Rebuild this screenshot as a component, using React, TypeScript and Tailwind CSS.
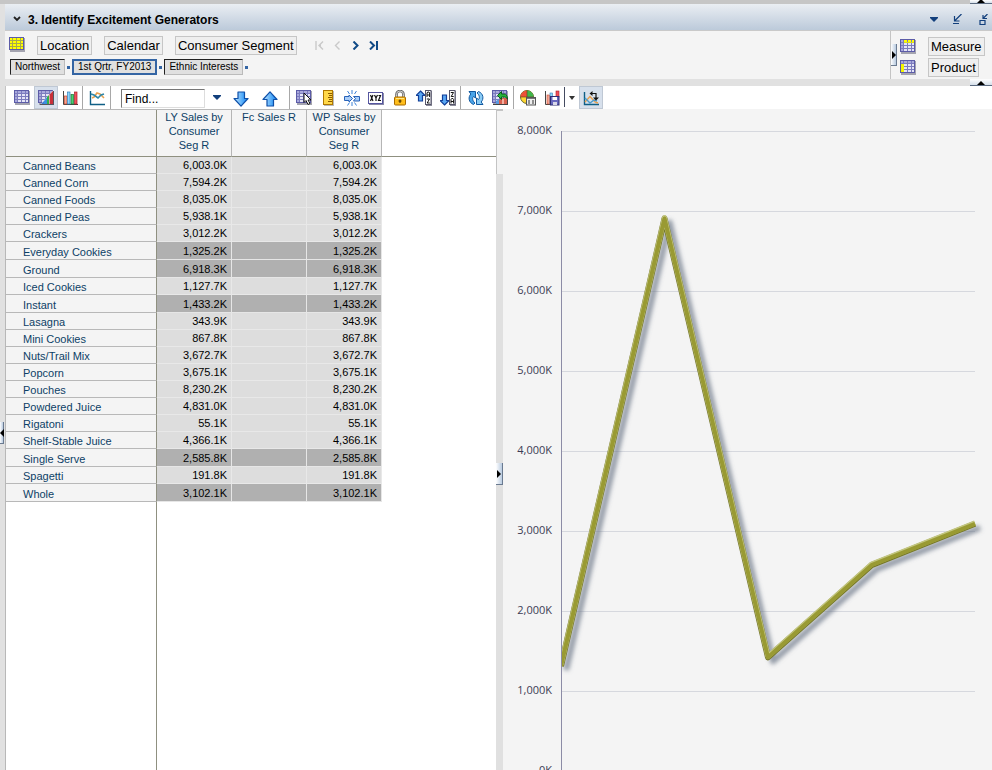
import type { ReactNode } from "react";

const rows = [
  { name: "Canned Beans", value: "6,003.0K" },
  { name: "Canned Corn", value: "7,594.2K" },
  { name: "Canned Foods", value: "8,035.0K" },
  { name: "Canned Peas", value: "5,938.1K" },
  { name: "Crackers", value: "3,012.2K" },
  { name: "Everyday Cookies", value: "1,325.2K", selected: true },
  { name: "Ground", value: "6,918.3K", selected: true },
  { name: "Iced Cookies", value: "1,127.7K" },
  { name: "Instant", value: "1,433.2K", selected: true },
  { name: "Lasagna", value: "343.9K" },
  { name: "Mini Cookies", value: "867.8K" },
  { name: "Nuts/Trail Mix", value: "3,672.7K" },
  { name: "Popcorn", value: "3,675.1K" },
  { name: "Pouches", value: "8,230.2K" },
  { name: "Powdered Juice", value: "4,831.0K" },
  { name: "Rigatoni", value: "55.1K" },
  { name: "Shelf-Stable Juice", value: "4,366.1K" },
  { name: "Single Serve", value: "2,585.8K", selected: true },
  { name: "Spagetti", value: "191.8K" },
  { name: "Whole", value: "3,102.1K", selected: true },
];

const axisLabels = ["8,000K", "7,000K", "6,000K", "5,000K", "4,000K", "3,000K", "2,000K", "1,000K", "0K"];

// the chart plots the selected rows only
const PLOT_W = 414;
const STEP = 80;
const selected = rows.filter((r) => r.selected).map((r) => parseFloat(r.value.replace(",", "")));
const points = selected
  .map((v, i) => `${(i * PLOT_W) / (selected.length - 1)},${8 * STEP - (v / 1000) * STEP}`)
  .join(" ");

function Icon({ children, w = 16, h = 16 }: { children: ReactNode; w?: number; h?: number }) {
  return (
    <svg width={w} height={h} viewBox={`0 0 ${w} ${h}`} aria-hidden="true" className="block shrink-0">
      {children}
    </svg>
  );
}

const gridCols = [
  [1, 2],
  [4, 3],
  [8, 3],
  [12, 2],
];
const gridRows = [
  [1, 2],
  [4, 2],
  [7, 2],
  [10, 2],
];

function GridShape({ mark = "none" }: { mark?: "none" | "all" | "top" | "left" }) {
  return (
    <g shapeRendering="crispEdges">
      <rect x="1" y="1" width="15" height="14" fill="#a4a4b0" />
      <rect width="15" height="13" fill="#5c5ca8" />
      <rect x="1" y="1" width="13" height="11" fill={mark === "all" ? "#a8a850" : "#7c7cbe"} />
      {gridRows.map(([y, h], r) =>
        gridCols.map(([x, w], c) => {
          const yellow =
            mark === "all" || (mark === "top" && r === 0 && c > 0) || (mark === "left" && c === 0 && r > 0);
          const fill = yellow ? "#ffff00" : r === 0 || c === 0 ? "#a9a9dc" : "#e4e4f6";
          return <rect key={`${r}-${c}`} x={x} y={y} width={w} height={h} fill={fill} />;
        })
      )}
      {mark === "top" && <rect x="4" y="3" width="10" height="1" fill="#d8d820" />}
      {mark === "left" && <rect x="1" y="4" width="3" height="8" fill="#f4f400" />}
    </g>
  );
}

function GridIcon({ mark }: { mark?: "none" | "all" | "top" | "left" }) {
  return (
    <Icon>
      <GridShape mark={mark} />
    </Icon>
  );
}

function GridChartIcon() {
  return (
    <Icon>
      <GridShape />
      <path d="M2 15 15.500 0v15z" fill="#fff" />
      <path d="M3 14 6 11v3z" fill="#3f7fd0" />
      <path d="M6 14v-3l3-4v7z" fill="#3d8fe0" />
      <path d="M9 14V7l2-2v9z" fill="#2fb04c" />
      <path d="M11.500 14V4.500L15 1v13z" fill="#c9303a" />
      <path d="M2 14.500h14M15.500 1v14" stroke="#55555f" />
    </Icon>
  );
}

function BarsIcon() {
  return (
    <Icon>
      <path d="M1.500 1v13.500H16" fill="none" stroke="#444" />
      <rect x="2.500" y="6" width="2.500" height="8" fill="#f6a592" stroke="#c8492f" strokeWidth=".7" />
      <rect x="5.500" y="2" width="2.500" height="12" fill="#8fd6fa" stroke="#2f7fc0" strokeWidth=".7" />
      <rect x="9" y="4.500" width="2.500" height="9.500" fill="#4ad070" stroke="#1b7334" strokeWidth=".7" />
      <rect x="12.500" y="2" width="2.500" height="12" fill="#f0505c" stroke="#a81f27" strokeWidth=".7" />
    </Icon>
  );
}

function LineIcon() {
  return (
    <Icon>
      <path d="M1.500 1v13.500H16" fill="none" stroke="#0f5f86" strokeWidth="1.400" />
      <path d="m3 8 2-1 3-4 3 1 4 4" fill="none" stroke="#e8a04e" strokeWidth="1.600" />
      <path d="m2 4 3 1 4 3 3-3 3-1" fill="none" stroke="#2d88aa" strokeWidth="1.600" />
    </Icon>
  );
}

function ArrowIcon({ up = false }: { up?: boolean }) {
  return (
    <Icon>
      <defs>
        <linearGradient id={up ? "au" : "ad"} x1="0" x2="1">
          <stop offset="0" stopColor="#bfe6ff" />
          <stop offset="1" stopColor="#0c84f4" />
        </linearGradient>
      </defs>
      <path
        d={up ? "M8 .8 15 8.500H11.500V15H5V8.500H1z" : "M8 15.200 15 7.500H11.500V1H5V7.500H1z"}
        fill={up ? "url(#au)" : "url(#ad)"}
        stroke="#0e4fa8"
        strokeWidth="1.200"
        strokeLinejoin="round"
      />
    </Icon>
  );
}

function GridCursorIcon() {
  return (
    <Icon>
      <GridShape />
      <path d="M8 3v9.500l2-2 2 4 2-1-2-3.500h3z" fill="#fff" stroke="#111" />
    </Icon>
  );
}

function RulerIcon() {
  return (
    <Icon>
      <rect x="4" y="1" width="10" height="15" fill="#8a8a8a" opacity=".6" />
      <rect x="3.500" y=".5" width="9" height="14" fill="#ffd84a" stroke="#b07800" />
      <path d="M8 3.500h4M9 5.500h3M8 7.500h4M9 9.500h3M8 11.500h4" stroke="#8a5a00" />
    </Icon>
  );
}

function SplitIcon() {
  return (
    <Icon>
      <path d="M.5 6.500H5V5l3.500 3.500L5 12v-1.500H.5z" fill="#a9cdf8" stroke="#2862b8" />
      <path d="M15.500 6.500H9.500l2 2-2 2.500h6z" fill="#a9cdf8" stroke="#2862b8" />
      <path d="M8 0v4M3.500 1l2 3M12.500 1l-2 3M8 12v4M3.500 15.500l2-3M12.500 15.500l-2-3" stroke="#3f83d8" />
    </Icon>
  );
}

function XyzIcon() {
  return (
    <Icon>
      <rect x="1" y="3" width="15" height="12" fill="#8888a8" />
      <rect x=".5" y="2.500" width="14" height="11" fill="#fff" stroke="#5656a0" />
      <path
        d="m2.500 5 2.500 6M5 5l-2.500 6M6.500 5 8 8l1.500-3M8 8v3M10.500 5.500h2l-2 5H13"
        fill="none"
        stroke="#111"
        strokeWidth="1.200"
      />
    </Icon>
  );
}

function LockIcon() {
  return (
    <Icon>
      <path d="M4.500 8V4.500a3.500 3.500 0 0 1 7 0V8" fill="none" stroke="#666" strokeWidth="2.600" />
      <path d="M4.500 8V4.500a3.500 3.500 0 0 1 7 0V8" fill="none" stroke="#ddd" strokeWidth=".9" />
      <rect x="2.500" y="7" width="11" height="8" rx="1" fill="#ffbe1c" stroke="#a86a00" />
      <path d="M4 8.500h8" stroke="#ffe88a" />
      <path d="M8 9.500v3.500M6.500 11h3" stroke="#3d2600" />
    </Icon>
  );
}

function SortIcon({ down = false }: { down?: boolean }) {
  return (
    <Icon>
      <path
        d={down ? "M4.500 15 9 10.500H6.500V5H2.500v5.500H0z" : "M4.500 1 9 5.500H6.500V11H2.500V5.500H0z"}
        fill="#5aa8f4"
        stroke="#123f98"
        strokeWidth="1.200"
      />
      <rect x="10" y="1" width="6" height="15" fill="#8a8a98" />
      <rect x="9.500" y=".5" width="5.500" height="14" fill="#fff" stroke="#55556a" />
      <path
        d="M11 7V3l.7-1h1.200l.7 1v4M11 5h2.600"
        transform={down ? "translate(0 6.500)" : undefined}
        fill="none"
        stroke="#111"
      />
      <path
        d="M10.800 2.500h2.700l-2.300 4h2.500"
        transform={down ? undefined : "translate(0 6.500)"}
        fill="none"
        stroke="#111"
      />
    </Icon>
  );
}

function RefreshIcon() {
  return (
    <Icon>
      <path
        d="M1 1.500h6.500V8L5.500 6.500C4 8 4.500 11 7 13l-1.500 1.500C.5 12.500 0 7 2.800 4z"
        fill="#4aa4e8"
        stroke="#1259a0"
      />
      <path
        d="M15 14.500H8.500V8l2 1.500C12 8 11.500 5 9 3l1.500-1.500C15.500 3.500 16 9 13.200 12z"
        fill="#8accf6"
        stroke="#1259a0"
      />
    </Icon>
  );
}

function GridExportIcon() {
  return (
    <Icon>
      <GridShape />
      <path d="M4 14h11V8H9z" fill="#d8604e" />
      <path d="M4 14v-3l3-2v5z" fill="#5a9be0" />
      <path d="M10 14V9h2v5z" fill="#f2b0a0" />
      <path d="m5.500 5.500 4-4V4h2.500c2 0 3.500 1.500 3.500 5-1-1.500-2-2-3.500-2H9.500v2.500z" fill="#28b53c" stroke="#0c5c1a" />
      <path d="M1 14.500h15M15.500 9v6" stroke="#444" />
    </Icon>
  );
}

function PieIcon() {
  return (
    <Icon>
      <circle cx="7" cy="7" r="6.500" fill="#ffd632" stroke="#6a6a2a" />
      <path d="M7 7V.5A6.500 6.500 0 0 1 13.500 7z" fill="#3eb64c" />
      <path d="M7 7H.5A6.500 6.500 0 0 1 7 .5z" fill="#ee5038" />
      <path d="M7 .5V7h6.500M.5 7H7" fill="none" stroke="#6a4a1a" strokeWidth=".7" />
      <rect x="6.500" y="7.500" width="9" height="7.500" fill="#eee" stroke="#555" />
      <path d="M7 8.500h8" stroke="#777" />
      <path d="M8 11h2m2 0h2M8 13h2m2 0h2" stroke="#333" />
    </Icon>
  );
}

function ChartSaveIcon() {
  return (
    <Icon>
      <path d="M1.500 1v13.500H14" fill="none" stroke="#444" />
      <rect x="3" y="5" width="2.500" height="9" fill="#f6a592" stroke="#c8492f" strokeWidth=".6" />
      <rect x="6" y="3" width="2.500" height="11" fill="#8fd6fa" stroke="#2f7fc0" strokeWidth=".6" />
      <rect x="12" y="1" width="3" height="6" fill="#f0505c" stroke="#a81f27" strokeWidth=".6" />
      <rect x="6.500" y="6.500" width="8.500" height="8.500" fill="#6868c0" stroke="#2c2c70" />
      <rect x="8.500" y="7" width="4.500" height="3" fill="#fff" />
      <rect x="9" y="12" width="4" height="3" fill="#d8d8e8" />
    </Icon>
  );
}

function LinkChartIcon() {
  return (
    <Icon>
      <path d="M1.500 2v12.500H16" fill="none" stroke="#0f5f86" strokeWidth="1.400" />
      <path d="m2 12 5-5.500 5 5.500 3 1" fill="none" stroke="#e8a04e" strokeWidth="1.400" />
      <path d="m2 8 5 5 4-3 3 1" fill="none" stroke="#4b9ccc" strokeWidth="1.400" />
      <path d="M8 3.500h5v5" fill="none" stroke="#111" strokeWidth="1.200" />
      <path d="M6.500 3.500 9.500 1v5zM10 7.500h6l-3 3z" fill="#111" />
    </Icon>
  );
}

function Caret({ fill = "#123f7c" }: { fill?: string }) {
  return (
    <Icon w={8} h={5}>
      <path d="M0 0h8v1L4 5 0 1z" fill={fill} />
    </Icon>
  );
}

function ToolButton({ label, children, active = false }: { label: string; children: ReactNode; active?: boolean }) {
  return (
    <button
      type="button"
      aria-label={label}
      aria-pressed={active}
      className={
        active
          ? "flex h-full w-6 shrink-0 items-center justify-center border border-[#bfc8d4] bg-[#d7e0ec]"
          : "flex h-full w-6 shrink-0 items-center justify-center"
      }
    >
      {children}
    </button>
  );
}

function Separator() {
  return <span className="h-full w-px shrink-0 bg-[#a8a8a8]" />;
}

function DimensionButton({ children }: { children: ReactNode }) {
  return (
    <button
      type="button"
      className="h-[19px] border border-[#c6c6c6] bg-[#efefef] px-[2px] text-[13px] leading-[17px] whitespace-nowrap text-black"
    >
      {children}
    </button>
  );
}

function Chip({ children, active = false }: { children: ReactNode; active?: boolean }) {
  return (
    <button
      type="button"
      className={
        active
          ? "h-4 border-2 border-[#3465a4] bg-[#e0e0e0] px-1 text-[10px] leading-3 whitespace-nowrap"
          : "h-4 border border-t-[#222] border-r-[#bbb] border-b-[#bbb] border-l-[#222] bg-[#e0e0e0] px-1 text-[10px] leading-[14px] whitespace-nowrap"
      }
    >
      {children}
    </button>
  );
}

function Dot() {
  return <span className="mx-[2px] size-[3px] shrink-0 bg-[#3465a4]" />;
}

function Grip({ label, left = false }: { label: string; left?: boolean }) {
  return (
    <button
      type="button"
      aria-label={label}
      className="flex h-[22px] w-full items-center justify-center border-r border-b border-[#6a7a90] bg-linear-to-r from-white to-[#b9cbe0]"
    >
      <Icon w={4} h={8}>
        <path d={left ? "M4 0v8L0 4z" : "M0 0v8l4-4z"} fill="#000" />
      </Icon>
    </button>
  );
}

function UpTab({ label }: { label: string }) {
  return (
    <button
      type="button"
      aria-label={label}
      className="flex h-full w-[22px] items-end justify-center border-b border-[#5a6a80] bg-linear-to-b from-white to-[#d5dfea]"
    >
      <Icon w={8} h={4}>
        <path d="M4 0 8 4H0z" fill="#000" />
      </Icon>
    </button>
  );
}

function TitleBar() {
  return (
    <header className="flex h-[27px] shrink-0 items-center border-b border-[#c9c9c9] bg-linear-to-b from-[#eaeef3] to-[#bccada] pt-1 pr-1 pl-2">
      <Icon w={8} h={6}>
        <path d="m1 1 3 3 3-3" fill="none" stroke="#222" strokeWidth="1.800" />
      </Icon>
      <h1 className="ml-[7px] flex-1 pt-[2px] text-[12px] leading-4 font-bold text-black">
        3. Identify Excitement Generators
      </h1>
      <div className="flex items-center gap-[15px]">
        <button type="button" aria-label="Menu">
          <Caret />
        </button>
        <button type="button" aria-label="Restore">
          <Icon w={9} h={10}>
            <path d="M8.500 0 2 6.500M1.500 2v5h5M0 9.500h6" fill="none" stroke="#123f7c" strokeWidth="1.200" />
          </Icon>
        </button>
        <button type="button" aria-label="Detach" className="ml-[2px]">
          <Icon w={9} h={11}>
            <path d="M8.500 0 4.500 4M4 1v3.500h4M1 6.500h5v4H1z" fill="none" stroke="#123f7c" strokeWidth="1.200" />
          </Icon>
        </button>
      </div>
    </header>
  );
}

function NavButton({ label, d, off = false }: { label: string; d: string; off?: boolean }) {
  return (
    <button type="button" aria-label={label} disabled={off} className="flex w-[18px] justify-center">
      <Icon w={9} h={9}>
        <path d={d} fill="none" stroke={off ? "#c9c9c9" : "#104a86"} strokeWidth={off ? 1.4 : 2} />
      </Icon>
    </button>
  );
}

function Dimensions() {
  return (
    <section className="flex h-12 shrink-0 bg-[#f4f4f4]">
      <div className="min-w-0 flex-1 pl-1">
        <div className="mt-1 flex h-5 items-center">
          <GridIcon mark="all" />
          <div className="ml-3 flex gap-3">
            <DimensionButton>Location</DimensionButton>
            <DimensionButton>Calendar</DimensionButton>
            <DimensionButton>Consumer Segment</DimensionButton>
          </div>
          <div className="ml-[14px] flex">
            <NavButton label="First" off d="M1 0v9M8 .5 4 4.500l4 4M4 4.500h2" />
            <NavButton label="Previous" off d="M6.500.5 2.500 4.500l4 4" />
            <NavButton label="Next" d="m2.500.5 4 4-4 4" />
            <NavButton label="Last" d="m1 .5 4 4-4 4M8 0v9" />
          </div>
        </div>
        <div className="mt-1 flex items-center pl-px">
          <Chip>Northwest</Chip>
          <Dot />
          <Chip active>1st Qrtr, FY2013</Chip>
          <Dot />
          <Chip>Ethnic Interests</Chip>
          <Dot />
        </div>
      </div>
      <div className="flex w-[102px] shrink-0 border-l border-[#c4c4c4]">
        <div className="w-[6px] pt-[13px]">
          <Grip label="Collapse axes" />
        </div>
        <div className="flex flex-col gap-[2px] pt-[6px] pl-[3px]">
          <div className="flex items-center gap-3">
            <GridIcon mark="top" />
            <DimensionButton>Measure</DimensionButton>
          </div>
          <div className="flex items-center gap-3">
            <GridIcon mark="left" />
            <DimensionButton>Product</DimensionButton>
          </div>
        </div>
      </div>
    </section>
  );
}

function Toolbar() {
  return (
    <div role="toolbar" className="flex h-[23px] shrink-0 items-center border-l border-[#c4c4c4] bg-white pl-1">
      <ToolButton label="Table">
        <GridIcon />
      </ToolButton>
      <ToolButton label="Table and graph" active>
        <GridChartIcon />
      </ToolButton>
      <ToolButton label="Graph">
        <BarsIcon />
      </ToolButton>
      <Separator />
      <div className="flex h-full w-[27px] justify-center">
        <ToolButton label="Line chart">
          <LineIcon />
        </ToolButton>
      </div>
      <Separator />
      <input
        type="text"
        aria-label="Find"
        defaultValue="Find..."
        className="mt-[2px] ml-[10px] h-[19px] w-[84px] border border-t-[#777] border-r-[#ddd] border-b-[#ddd] border-l-[#777] bg-white px-[3px] text-[12px] leading-4 text-black outline-none"
      />
      <ToolButton label="Find options">
        <Caret />
      </ToolButton>
      <div className="flex h-full gap-[5px] pt-[2px]">
        <ToolButton label="Find next">
          <ArrowIcon />
        </ToolButton>
        <ToolButton label="Find previous">
          <ArrowIcon up />
        </ToolButton>
      </div>
      <div className="ml-[7px] flex h-full">
        <Separator />
      </div>
      <div className="ml-[2px] flex h-full">
        <ToolButton label="Select cells">
          <GridCursorIcon />
        </ToolButton>
        <ToolButton label="Column width">
          <RulerIcon />
        </ToolButton>
        <ToolButton label="Spread">
          <SplitIcon />
        </ToolButton>
        <ToolButton label="Format">
          <XyzIcon />
        </ToolButton>
        <ToolButton label="Lock">
          <LockIcon />
        </ToolButton>
        <ToolButton label="Sort ascending">
          <SortIcon />
        </ToolButton>
        <ToolButton label="Sort descending">
          <SortIcon down />
        </ToolButton>
      </div>
      <Separator />
      <div className="mr-px ml-[3px] flex h-full">
        <ToolButton label="Refresh">
          <RefreshIcon />
        </ToolButton>
        <ToolButton label="Export">
          <GridExportIcon />
        </ToolButton>
      </div>
      <Separator />
      <div className="ml-[2px] flex h-full">
        <ToolButton label="Chart calculation">
          <PieIcon />
        </ToolButton>
        <ToolButton label="Save chart">
          <ChartSaveIcon />
        </ToolButton>
        <span className="mt-px h-5 w-px bg-[#444b60]" />
        <button type="button" aria-label="Save options" className="flex w-[14px] items-center justify-center">
          <Icon w={6} h={4}>
            <path d="M0 0h6L3 4z" fill="#333" />
          </Icon>
        </button>
      </div>
      <ToolButton label="Link chart to selection" active>
        <LinkChartIcon />
      </ToolButton>
    </div>
  );
}

function SalesTable() {
  const head =
    "border-r border-b border-r-[#b5b5b5] border-b-[#8f9080] bg-[#f4f4f4] px-1 text-center align-top font-normal leading-[14px] text-[#0d3f66]";
  return (
    <section className="flex min-h-0 flex-col border-l border-[#b8b8b8] bg-white">
      <table className="w-full table-fixed border-separate border-spacing-0 border-t border-[#b8b8b8] text-[11px]">
        <colgroup>
          <col className="w-[151px]" />
          <col className="w-[75px]" />
          <col className="w-[75px]" />
          <col className="w-[75px]" />
          <col />
        </colgroup>
        <thead>
          <tr className="h-[47px]">
            <td className="border-r border-b border-[#8f9080] bg-[#f4f4f4]" />
            <th scope="col" className={head}>LY Sales by Consumer Seg R</th>
            <th scope="col" className={head}>Fc Sales R</th>
            <th scope="col" className={head}>WP Sales by Consumer Seg R</th>
            <td className="border-b border-[#8f9080]" />
          </tr>
        </thead>
        <tbody>
          {rows.map((row) => {
            const cell = row.selected
              ? "border-r border-b border-[#e6e6e6] bg-[#b0b0b0] py-0 pr-1 text-right leading-4 text-black"
              : "border-r border-b border-[#e8e8e8] bg-[#dddddd] py-0 pr-1 text-right leading-4 text-black";
            return (
              <tr key={row.name} className={row.selected ? "h-[18px]" : "h-[17px]"}>
                <th
                  scope="row"
                  className="border-r border-b border-r-[#8f9080] border-b-[#b8b8b8] bg-[#f4f4f4] pt-[2px] pl-[17px] text-left leading-[14px] font-normal text-[#0d3f66]"
                >
                  {row.name}
                </th>
                <td className={cell}>{row.value}</td>
                <td className={cell} />
                <td className={cell}>{row.value}</td>
                <td />
              </tr>
            );
          })}
        </tbody>
      </table>
      <div className="w-[151px] flex-1 border-r border-[#8f9080]" />
    </section>
  );
}

function SalesChart() {
  return (
    <section className="flex min-w-0 overflow-hidden bg-[#f4f4f4] pt-[22px] pr-[17px]">
      <div className="-mt-[9px] w-[49px] shrink-0 text-right font-['Open_Sans','Noto_Sans',sans-serif] text-[11px] leading-4 text-[#3c3c54]">
        {axisLabels.map((label) => (
          <div key={label} className="h-20">
            {label}
          </div>
        ))}
      </div>
      <svg
        viewBox={`0 0 ${PLOT_W} 640`}
        preserveAspectRatio="none"
        className="ml-[9px] h-[640px] min-w-0 flex-1 overflow-visible"
        role="img"
        aria-label="Sales of the selected products"
      >
        <defs>
          <clipPath id="plot">
            <rect x="0" y="-10" width={PLOT_W + 12} height="660" />
          </clipPath>
          <filter id="shadow" x="-5%" y="-5%" width="115%" height="115%">
            <feGaussianBlur stdDeviation="2" />
          </filter>
        </defs>
        {axisLabels.map((label, i) => (
          <path key={label} d={`M0 ${i * STEP + 0.5}H${PLOT_W}`} stroke="#d6d8de" />
        ))}
        <g clipPath="url(#plot)" fill="none" strokeLinejoin="round">
          <polyline
            points={points}
            transform="translate(5 5)"
            stroke="#6c7688"
            strokeOpacity="0.7"
            strokeWidth="6"
            filter="url(#shadow)"
          />
          <g transform="translate(0 1)">
            <polyline points={points} stroke="#76782a" strokeWidth="6" />
            <polyline points={points} transform="translate(0 -1)" stroke="#c3c680" strokeWidth="5" />
            <polyline points={points} stroke="#999a33" strokeWidth="4" />
          </g>
        </g>
        <path d="M.5 0v640" stroke="#8c8ca6" />
      </svg>
    </section>
  );
}

export default function App() {
  return (
    <div className="flex h-screen flex-col overflow-hidden bg-[#e1e1e1] font-['Liberation_Sans',Arial,sans-serif] text-black">
      <div className="flex h-1 shrink-0 justify-end bg-[#c6c6c6]">
        <UpTab label="Collapse header" />
      </div>
      <div className="flex min-h-0 flex-1">
        <div className="flex w-[5px] shrink-0 flex-col pt-[418px] pr-px">
          <Grip label="Collapse side panel" left />
        </div>
        <main className="flex min-w-0 flex-1 flex-col">
          <TitleBar />
          <Dimensions />
          <div className="flex h-[7px] shrink-0 justify-end">
            <UpTab label="Collapse dimensions" />
          </div>
          <Toolbar />
          <div className="grid min-h-0 flex-1 grid-cols-[491px_7px_minmax(0,1fr)]">
            <SalesTable />
            <div className="flex flex-col bg-[#e0e0e0]">
              <div className="h-[65px] shrink-0 border-t-2 border-l border-[#c4c4c4] bg-[#f4f4f4]" />
              <div className="pt-[289px]">
                <Grip label="Collapse chart" />
              </div>
            </div>
            <SalesChart />
          </div>
        </main>
      </div>
    </div>
  );
}
